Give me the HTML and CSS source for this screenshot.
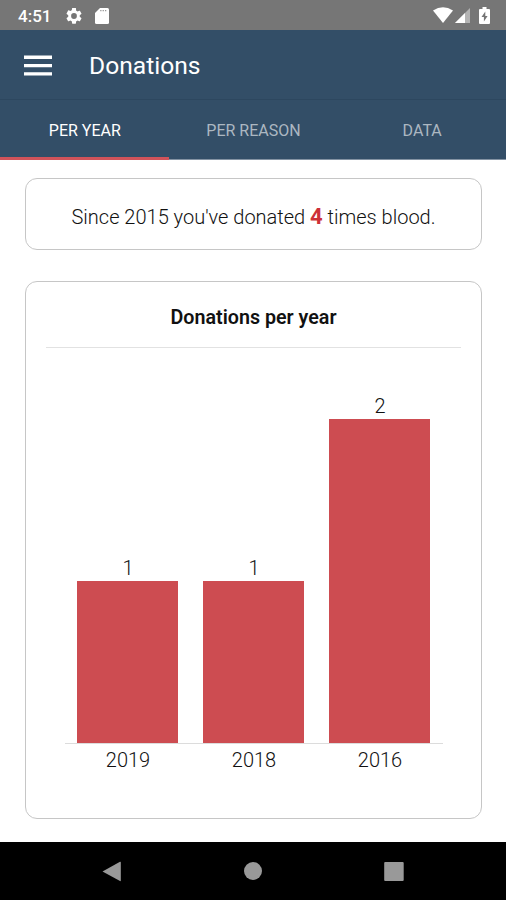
FILE: index.html
```html
<!DOCTYPE html>
<html lang="en">
<head>
<meta charset="utf-8">
<title>Donations</title>
<link rel="stylesheet" href="styles.css">
</head>
<body>
<div class="status">
  <span class="clock">4:51</span>
  <svg class="gear" width="16" height="16" viewBox="2 2 20 20"><path fill="#fff" d="M19.14 12.94c.04-.3.06-.61.06-.94s-.02-.64-.07-.94l2.03-1.58a.49.49 0 0 0 .12-.61l-1.92-3.32a.49.49 0 0 0-.59-.22l-2.39.96c-.5-.38-1.03-.7-1.62-.94l-.36-2.54A.48.48 0 0 0 13.92 2h-3.84c-.24 0-.43.17-.47.41l-.36 2.54c-.59.24-1.13.57-1.62.94l-2.39-.96a.48.48 0 0 0-.59.22L2.74 8.87a.48.48 0 0 0 .12.61l2.03 1.58c-.05.3-.09.63-.09.94s.02.64.07.94l-2.03 1.58a.49.49 0 0 0-.12.61l1.92 3.32c.12.22.37.29.59.22l2.39-.96c.5.38 1.03.7 1.62.94l.36 2.54c.05.24.24.41.48.41h3.84c.24 0 .44-.17.47-.41l.36-2.54c.59-.24 1.13-.56 1.62-.94l2.39.96c.22.08.47 0 .59-.22l1.92-3.32a.48.48 0 0 0-.12-.61zM12 15.6A3.6 3.6 0 1 1 12 8.4a3.6 3.6 0 0 1 0 7.2z"/></svg>
  <svg class="sd" width="14" height="16" viewBox="0 0 14 16"><path fill="#fff" d="M5 0h7.5Q14 0 14 1.5v13q0 1.5-1.5 1.5h-11Q0 16 0 14.500V5z"/><path stroke="#999" stroke-width="1.200" stroke-dasharray="1.300 1.100" d="M5.200 2.700H12"/></svg>
  <svg class="wifi" width="20" height="16" viewBox="0 0 20 16"><path fill="#fff" d="M0 3.600Q10-3 20 3.600L10 16z"/></svg>
  <svg class="signal" width="15" height="15" viewBox="0 0 15 15"><path fill="#b4b4b4" d="M15 0v15H0z"/><path fill="#fff" d="M10 5v10H0z"/></svg>
  <svg class="battery" width="11" height="17" viewBox="0 0 11 17"><path fill="#fff" d="M3.500 0h4v2H10q1 0 1 1v13q0 1-1 1H1q-1 0-1-1V3q0-1 1-1h2.500z"/><path fill="#757575" d="M6.300 4.500 2.500 10h2.400v4.500L8.600 9H6.300z"/></svg>
</div>
<header class="bar">
  <svg width="28" height="21" viewBox="0 0 28 21"><path stroke="#fff" stroke-width="3.400" d="M0 2.200h28M0 10.600h28M0 18.900h28"/></svg>
  <h1>Donations</h1>
</header>
<nav class="tabs">
  <span class="tab active">PER YEAR</span>
  <span class="tab">PER REASON</span>
  <span class="tab">DATA</span>
</nav>
<main>
  <section class="card summary"><p>Since 2015 you've donated <b>4</b> times blood.</p></section>
  <section class="card report">
    <h2>Donations per year</h2>
    <div class="chart">
      <div class="col"><span>1</span><div class="fill" style="height:162.5px"></div></div>
      <div class="col"><span>1</span><div class="fill" style="height:162.5px"></div></div>
      <div class="col"><span>2</span><div class="fill" style="height:324.5px"></div></div>
    </div>
    <div class="years"><span>2019</span><span>2018</span><span>2016</span></div>
  </section>
</main>
<footer class="nav">
  <svg width="19" height="21" viewBox="0 0 19 21"><path fill="#999" d="M.5 10.500 18 .8q.8-.3.8.6v18.200q0 .9-.8.500z"/></svg>
  <svg width="18" height="18" viewBox="0 0 18 18"><circle cx="9" cy="9" r="9" fill="#999"/></svg>
  <svg width="20" height="19" viewBox="0 0 20 19"><rect width="19.500" height="19" x=".2" rx="1" fill="#999"/></svg>
</footer>
</body>
</html>
```
FILE: styles.css
```css
* { box-sizing: border-box; }
body {
  margin: 0;
  width: 506px;
  height: 900px;
  display: flex;
  flex-direction: column;
  overflow: hidden;
  background: #fff;
  color: #111;
  font-family: Roboto, sans-serif;
}
svg { display: block; flex: none; }
h1, h2, p { margin: 0; font-weight: 400; white-space: nowrap; }
.status {
  flex: none;
  height: 30px;
  display: flex;
  align-items: center;
  padding: 0 16px 0 18px;
  background: #767676;
  color: #fff;
}
.clock { width: 48px; font-size: 17px; font-weight: 500; line-height: 30px; padding-top: 1px; }
.gear { margin-top: 1px; }
.sd { margin-left: 13px; margin-top: 1px; }
.wifi { margin-left: auto; }
.signal { margin-left: 2px; margin-top: 1px; }
.battery { margin-left: 9px; }
.bar {
  flex: none;
  height: 69px;
  display: flex;
  align-items: center;
  padding: 1px 24px 0;
  background: #334e67;
  color: #fff;
}
.bar h1 { margin-left: 37px; padding-top: 1px; font-size: 24.6px; line-height: 30px; }
.tabs {
  flex: none;
  height: 61px;
  display: flex;
  background: #334e67;
  border-top: 1px solid #2d475f;
  border-bottom: 1px solid #8493a3;
}
.tab {
  flex: 1;
  height: 60px;
  padding-left: 1px;
  line-height: 61px;
  text-align: center;
  font-size: 16px;
  color: #acb7c1;
}
.active { color: #fff; border-bottom: 3px solid #d1535a; }
main { flex: 1; padding: 18px 24px 0 25px; }
.card { border: 1px solid #c6c6c6; border-radius: 12px; }
.summary {
  height: 72px;
  display: flex;
  align-items: center;
  justify-content: center;
  font-size: 20px;
}
.summary p { padding-top: 5px; font-weight: 300; }
.summary b { color: #cd3038; font-size: 22px; font-weight: 700; line-height: 24px; }
.report { height: 538px; margin-top: 31px; padding: 0 20px; }
.report h2 {
  height: 66px;
  line-height: 71px;
  border-bottom: 1px solid #e2e2e2;
  text-align: center;
  font-size: 19.7px;
  font-weight: 600;
}
.chart {
  height: 396px;
  width: 378px;
  margin-left: 19px;
  display: flex;
  align-items: flex-end;
  border-bottom: 1px solid #dcdcdc;
}
.col { flex: 1; display: flex; flex-direction: column; align-items: center; }
.col span { font-size: 20px; line-height: 25px; font-weight: 300; }
.fill { width: 101px; background: #cd4c51; margin-right: 1px; }
.years { display: flex; width: 378px; margin-left: 19px; }
.years span { flex: 1; text-align: center; font-size: 20px; line-height: 33px; font-weight: 300; }
.nav {
  flex: none;
  height: 58px;
  display: flex;
  align-items: center;
  justify-content: space-between;
  padding: 0 102px 0 102px;
  background: #000;
}
```
